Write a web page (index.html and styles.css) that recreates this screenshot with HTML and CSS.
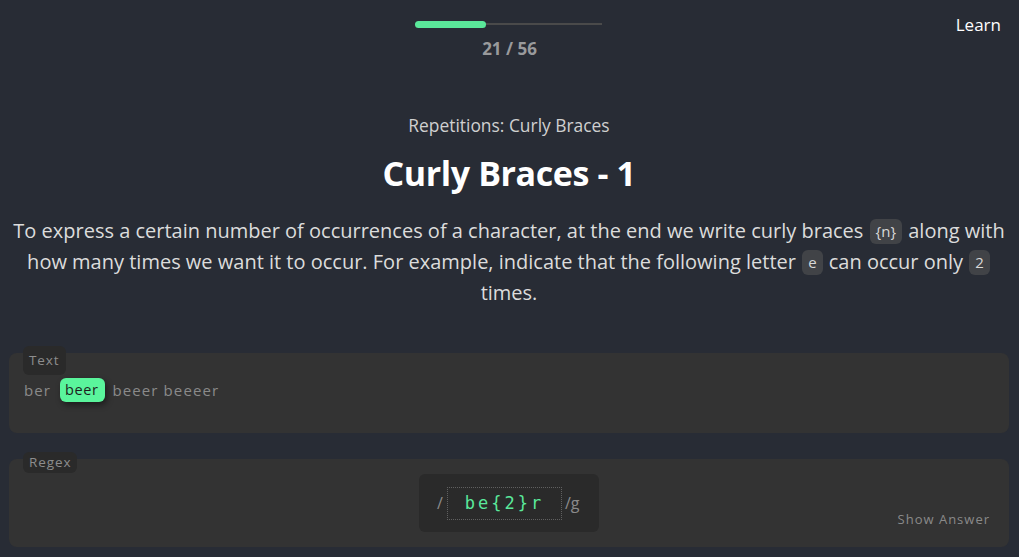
FILE: index.html
```html
<!DOCTYPE html>
<html lang="en">
<head>
<meta charset="utf-8">
<title>Curly Braces - 1</title>
<link rel="stylesheet" href="styles.css">
</head>
<body>
<header class="top">
  <div class="spacer"></div>
  <div class="progress">
    <div class="track"><div class="fill" style="width:38%"></div></div>
    <div class="count">21 / 56</div>
  </div>
  <div class="nav"><span class="learn">Learn</span></div>
</header>
<main class="lesson">
  <div class="section">Repetitions: Curly Braces</div>
  <h1 class="title">Curly Braces - 1</h1>
  <p class="desc">To express a certain number of occurrences of a character, at the end we write curly braces <code class="chip">{n}</code> along with how many times we want it to occur. For example, indicate that the following letter <code class="chip">e</code> can occur only <code class="chip">2</code> times.</p>
  <section class="card text-card">
    <span class="label label-text">Text</span>
    <div class="sample"><span class="word">ber</span><span class="match">beer</span><span class="word">beeer beeeer</span></div>
  </section>
  <section class="card regex-card">
    <span class="label">Regex</span>
    <div class="regex-row">
      <div class="regex-box">
        <span class="slash">/</span>
        <span class="input">be{2}r</span>
        <span class="flags">/g</span>
      </div>
    </div>
    <div class="answer-row"><span class="answer">Show Answer</span></div>
  </section>
</main>
</body>
</html>
```
FILE: styles.css
```css
* { box-sizing: border-box; }
html, body { margin: 0; padding: 0; }
body {
  background: #282c35;
  font-family: "Open Sans", "Noto Sans", sans-serif;
  color: #e0e0e0;
  width: 1019px;
  height: 557px;
  overflow: hidden;
}
.top {
  display: grid;
  grid-template-columns: 1fr 187px 1fr;
  padding-top: 20px;
  height: 88px;
}
.progress {
  display: flex;
  flex-direction: column;
  align-items: center;
  transform: translateX(-1px);
}
.track {
  width: 187px;
  height: 2px;
  margin-top: 3px;
  background: #4a4a4a;
  position: relative;
  display: flex;
  align-items: center;
}
.fill {
  height: 7px;
  background: #5ae89a;
  border-radius: 4px;
}
.count {
  margin-top: 14px;
  font-size: 17px;
  font-weight: 700;
  color: #999a9c;
  line-height: 20px;
  transform: translateX(1px);
}
.nav {
  display: flex;
  justify-content: flex-end;
  padding-right: 18px;
}
.learn {
  font-size: 17px;
  color: #ffffff;
  line-height: 14px;
  margin-top: -2px;
}
.lesson {
  display: flex;
  flex-direction: column;
  align-items: stretch;
  padding: 0 10px 0 9px;
}
.section {
  text-align: center;
  font-size: 17.4px;
  color: #d0d0d0;
  line-height: 24px;
  margin-top: 25px;
}
.title {
  text-align: center;
  font-size: 34px;
  font-weight: 700;
  color: #ffffff;
  margin: 13px 0 0 0;
  line-height: 46px;
  letter-spacing: -0.4px;
}
.desc {
  text-align: center;
  font-size: 20px;
  line-height: 31px;
  color: #dcdcdc;
  margin: 19px 0 0 0;
  padding: 0 0;
}
.chip {
  display: inline-block;
  font-family: "Open Sans", "Noto Sans", sans-serif;
  font-size: 15px;
  line-height: 25px;
  background: #414347;
  color: #d8d8d8;
  border-radius: 6px;
  padding: 0 6px;
  margin: 0 1px;
  vertical-align: 1px;
}
.card {
  position: relative;
  background: #333333;
  border-radius: 8px;
}
.text-card {
  margin-top: 45px;
  height: 80px;
  padding: 25px 15px 0;
}
.regex-card {
  margin-top: 26px;
  height: 88px;
  padding-top: 15px;
}
.label {
  position: absolute;
  top: -7px;
  left: 14px;
  background: #2a2a2a;
  color: #8d8d8d;
  font-size: 13.5px;
  letter-spacing: 0.9px;
  line-height: 21px;
  padding: 0 6px;
  border-radius: 6px;
}
.label-text {
  top: -7px;
  padding-top: 4px;
  padding-bottom: 4px;
}
.sample {
  display: flex;
  align-items: center;
  font-size: 15px;
  letter-spacing: 1.1px;
  color: #8a8a8a;
  line-height: 24px;
}
.match {
  background: #5af59c;
  color: #1e1e1e;
  border-radius: 6px;
  padding: 0 6px 0 5px;
  margin: 0 8px 0 9px;
  letter-spacing: 0.6px;
  font-size: 14.5px;
  box-shadow: 2px 3px 6px rgba(0,0,0,0.45);
}
.regex-row {
  display: flex;
  justify-content: center;
  padding-left: 0;
}
.regex-box {
  display: flex;
  align-items: center;
  width: 180px;
  height: 58px;
  background: #2a2a2a;
  border-radius: 6px;
  padding: 0 18px;
  color: #8a8a8a;
  font-size: 16px;
}
.slash { width: 10px; }
.input {
  border: 1px dotted #606060;
  width: 115px;
  height: 33px;
  display: flex;
  align-items: center;
  justify-content: center;
  font-family: "DejaVu Sans Mono", "Liberation Mono", monospace;
  font-size: 17px;
  letter-spacing: 3px;
  color: #5ae89a;
  padding-left: 2px;
  padding-right: 2px;
}
.flags {
  margin-left: 3px;
  font-size: 16px;
}
.answer-row {
  display: flex;
  justify-content: flex-end;
  padding-right: 19px;
  margin-top: -22px;
}
.answer {
  font-size: 13px;
  letter-spacing: 1px;
  color: #8a8a8a;
  line-height: 18px;
}
```
